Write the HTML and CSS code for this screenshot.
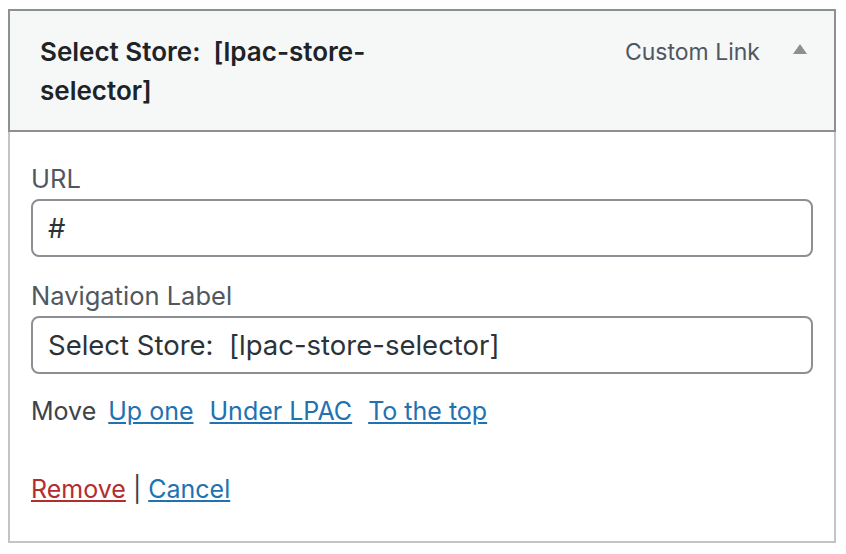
FILE: index.html
```html
<!DOCTYPE html>
<html lang="en">
  <head>
    <meta charset="UTF-8" />
    <meta name="viewport" content="width=device-width, initial-scale=1.0" />
    <title>Menu Item - Select Store</title>
    <link rel="stylesheet" href="styles.css">
  </head>
  <body>
    <div class="menu-item">
      <div class="item-handle">
        <span class="item-title">Select Store:&nbsp; [lpac-store-selector]</span>
        <span class="item-controls">
          <span class="item-type">Custom Link</span>
          <svg class="item-toggle" width="16" height="12" viewBox="0 0 16 12">
            <polygon points="8,1 15,11 1,11" fill="#8c8f94" />
          </svg>
        </span>
      </div>

      <div class="item-settings">
        <label class="field" for="url">
          <span class="field-label">URL</span>
          <input type="text" id="url" value="#" />
        </label>

        <label class="field" for="nav-label">
          <span class="field-label">Navigation Label</span>
          <input type="text" id="nav-label" value="Select Store:  [lpac-store-selector]" />
        </label>

        <div class="move-row">
          <span>Move</span>
          <a href="#">Up one</a>
          <a href="#">Under LPAC</a>
          <a href="#">To the top</a>
        </div>

        <div class="actions">
          <a href="#" class="remove">Remove</a> <span class="sep">|</span> <a href="#">Cancel</a>
        </div>
      </div>
    </div>
  </body>
</html>
```

FILE: styles.css
```css
body {
  font-family: Inter, "Noto Sans", sans-serif;
  background-color: #ffffff;
  margin: 9px 10px 0 8px;
  color: #3c434a;
}
.menu-item {
  width: 828px;
}
.item-handle {
  display: flex;
  justify-content: space-between;
  align-items: flex-start;
  background-color: #f6f7f7;
  border: 2px solid #8c8f94;
  padding: 21px 30px 20px 30px;
}
.item-title {
  max-width: 420px;
  font-size: 26px;
  font-weight: 600;
  line-height: 39px;
  color: #1d2327;
}
.item-controls {
  display: flex;
  align-items: center;
  gap: 32px;
  height: 39px;
}
.item-type {
  font-size: 23px;
  color: #50575e;
}
.item-toggle {
  margin-top: -6px;
  margin-right: -4px;
}
.item-settings {
  border: 2px solid #c3c4c7;
  border-top: none;
  padding: 29px 21px 34px 21px;
  box-shadow: 0 2px 2px rgba(0, 0, 0, 0.04);
}
.field {
  display: block;
  margin-bottom: 21px;
}
.field-label {
  display: block;
  font-size: 25.5px;
  line-height: 36px;
  color: #50575e;
  margin-bottom: 2px;
}
.field input {
  display: block;
  box-sizing: border-box;
  width: 100%;
  height: 58px;
  padding: 0 15px;
  border: 2px solid #8c8f94;
  border-radius: 8px;
  font-family: inherit;
  font-size: 27.5px;
  color: #2c3338;
  background: #ffffff;
  margin: 0;
}
.move-row {
  display: flex;
  gap: 16px;
  font-size: 25px;
  line-height: 36px;
  margin-top: -2px;
}
.move-row span {
  margin-right: -4px;
}
a {
  color: #2271b1;
  text-decoration: underline;
}
.actions {
  margin-top: 42px;
  font-size: 25px;
  line-height: 36px;
}
.actions .remove {
  color: #b32d2e;
}
.sep {
  color: #3c434a;
}
```
